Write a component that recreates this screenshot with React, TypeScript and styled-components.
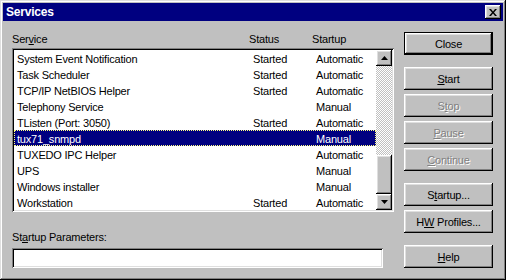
import * as React from "react";
import styled, { createGlobalStyle, css } from "styled-components";

const GlobalStyle = createGlobalStyle`
  body {
    margin: 0;
    overflow: hidden;
    background: #c0c0c0;
    font-family: "Liberation Sans", Arial, sans-serif;
    font-size: 11px;
    letter-spacing: -0.2px;
  }
`;

const raised = css`
  box-shadow: inset -1px -1px #000, inset 1px 1px #fff, inset -2px -2px #808080,
    inset 2px 2px #dfdfdf;
`;

const sunken = css`
  box-shadow: inset 1px 1px #808080, inset -1px -1px #fff, inset 2px 2px #000,
    inset -2px -2px #dfdfdf;
`;

const Window = styled.div`
  width: 506px;
  height: 280px;
  box-sizing: border-box;
  padding: 3px;
  background: #c0c0c0;
  box-shadow: inset -1px -1px #000, inset 1px 1px #dfdfdf, inset -2px -2px #808080,
    inset 2px 2px #fff;
  display: flex;
  flex-direction: column;
`;

const TitleBar = styled.div`
  height: 18px;
  background: #000080;
  color: #fff;
  font-weight: bold;
  font-size: 12px;
  display: flex;
  align-items: center;
  justify-content: space-between;
  padding-left: 3px;
  padding-right: 2px;
`;

const TitleButton = styled.div`
  width: 16px;
  height: 14px;
  box-sizing: border-box;
  background: #c0c0c0;
  ${raised};
  display: flex;
  align-items: center;
  justify-content: center;
`;

const Body = styled.div`
  display: flex;
  gap: 10px;
  padding: 11px 9px 0 9px;
`;

const LeftCol = styled.div`
  width: 382px;
  display: flex;
  flex-direction: column;
`;

const HeaderRow = styled.div`
  display: grid;
  grid-template-columns: 237px 63px 1fr;
  line-height: 14px;
  height: 13px;
`;

const ListBox = styled.div`
  margin-top: 3px;
  height: 164px;
  box-sizing: border-box;
  padding: 2px;
  background: #fff;
  ${sunken};
  display: flex;
`;

const Rows = styled.div`
  flex: 1;
`;

const Row = styled.div<{ $selected?: boolean }>`
  display: grid;
  grid-template-columns: 236px 63px 1fr;
  padding-left: 3px;
  height: 16px;
  line-height: 18px;
  white-space: nowrap;
  ${(p) =>
    p.$selected &&
    css`
      background: #000080;
      color: #fff;
      outline: 1px dotted #ffff80;
      outline-offset: -1px;
    `}
`;

const ScrollBar = styled.div`
  width: 16px;
  display: flex;
  flex-direction: column;
`;

const ArrowButton = styled.div`
  width: 16px;
  height: 16px;
  box-sizing: border-box;
  background: #c0c0c0;
  ${raised};
  display: flex;
  align-items: center;
  justify-content: center;
`;

const Track = styled.div`
  flex: 1;
  display: flex;
  flex-direction: column;
  justify-content: flex-end;
  background-image: repeating-conic-gradient(#c0c0c0 0% 25%, #fff 0% 50%);
  background-size: 2px 2px;
`;

const Thumb = styled.div`
  height: 39px;
  background: #c0c0c0;
  ${raised};
`;

const FieldLabel = styled.div`
  margin-top: 19px;
  line-height: 13px;
`;

const TextInput = styled.div`
  margin-top: 4px;
  width: 371px;
  height: 20px;
  box-sizing: border-box;
  background: #fff;
  ${sunken};
`;

const RightCol = styled.div`
  width: 89px;
  display: flex;
  flex-direction: column;
`;

const Button = styled.div<{ $top?: number; $default?: boolean; $disabled?: boolean }>`
  margin-top: ${(p) => p.$top ?? 0}px;
  height: 23px;
  box-sizing: border-box;
  background: #c0c0c0;
  display: flex;
  align-items: center;
  justify-content: center;
  padding-top: 1px;
  ${(p) =>
    p.$default
      ? css`
          border: 1px solid #000;
          ${raised};
        `
      : raised};
  ${(p) =>
    p.$disabled &&
    css`
      color: #808080;
      text-shadow: 1px 1px #fff;
    `}
`;

const services = [
  ["System Event Notification", "Started", "Automatic"],
  ["Task Scheduler", "Started", "Automatic"],
  ["TCP/IP NetBIOS Helper", "Started", "Automatic"],
  ["Telephony Service", "", "Manual"],
  ["TListen (Port: 3050)", "Started", "Automatic"],
  ["tux71_snmpd", "", "Manual"],
  ["TUXEDO IPC Helper", "", "Automatic"],
  ["UPS", "", "Manual"],
  ["Windows installer", "", "Manual"],
  ["Workstation", "Started", "Automatic"],
];

const Triangle = ({ up }: { up?: boolean }) => (
  <svg width="7" height="4" viewBox="0 0 7 4">
    <path d={up ? "M3.5 0 L7 4 L0 4 Z" : "M0 0 L7 0 L3.5 4 Z"} fill="#000" />
  </svg>
);

export default function App() {
  return (
    <>
      <GlobalStyle />
      <Window>
        <TitleBar>
          <span>Services</span>
          <TitleButton>
            <svg width="8" height="7" viewBox="0 0 8 7">
              <path d="M0 0h2l2 2.5L6 0h2L5 3.5 8 7H6L4 4.5 2 7H0l3-3.5z" fill="#000" />
            </svg>
          </TitleButton>
        </TitleBar>
        <Body>
          <LeftCol>
            <HeaderRow>
              <span>
                Ser<u>v</u>ice
              </span>
              <span>Status</span>
              <span>Startup</span>
            </HeaderRow>
            <ListBox>
              <Rows>
                {services.map(([name, status, startup]) => (
                  <Row key={name} $selected={name === "tux71_snmpd"}>
                    <span>{name}</span>
                    <span>{status}</span>
                    <span>{startup}</span>
                  </Row>
                ))}
              </Rows>
              <ScrollBar>
                <ArrowButton>
                  <Triangle up />
                </ArrowButton>
                <Track>
                  <Thumb />
                </Track>
                <ArrowButton>
                  <Triangle />
                </ArrowButton>
              </ScrollBar>
            </ListBox>
            <FieldLabel>
              St<u>a</u>rtup Parameters:
            </FieldLabel>
            <TextInput />
          </LeftCol>
          <RightCol>
            <Button $default>
              <span>Close</span>
            </Button>
            <Button $top={12}>
              <span>
                <u>S</u>tart
              </span>
            </Button>
            <Button $top={4} $disabled>
              <span>
                S<u>t</u>op
              </span>
            </Button>
            <Button $top={4} $disabled>
              <span>
                <u>P</u>ause
              </span>
            </Button>
            <Button $top={4} $disabled>
              <span>
                <u>C</u>ontinue
              </span>
            </Button>
            <Button $top={12}>
              <span>
                S<u>t</u>artup...
              </span>
            </Button>
            <Button $top={4}>
              <span>
                H<u>W</u> Profiles...
              </span>
            </Button>
            <Button $top={12}>
              <span>
                <u>H</u>elp
              </span>
            </Button>
          </RightCol>
        </Body>
      </Window>
    </>
  );
}
